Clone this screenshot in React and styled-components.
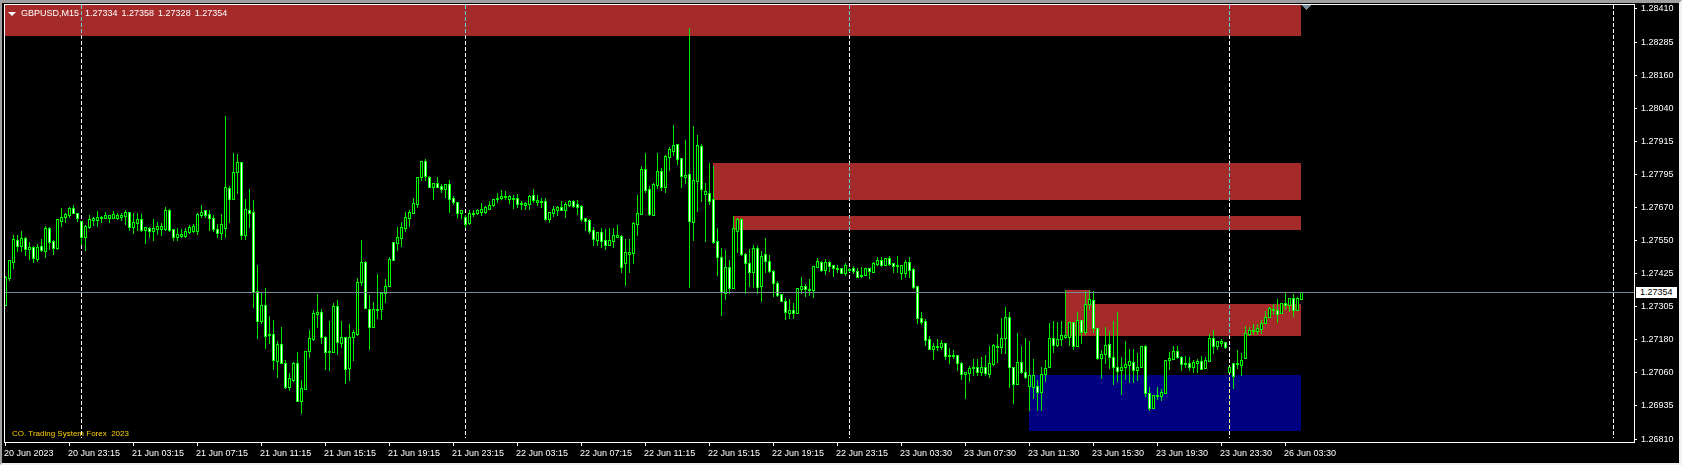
import React from "react";
import styled, { createGlobalStyle } from "styled-components";

const PRICES = [
  "1.28410", "1.28285", "1.28160", "1.28040", "1.27915", "1.27795", "1.27670",
  "1.27550", "1.27425", "1.27305", "1.27180", "1.27060", "1.26935", "1.26810",
];

const TIMES = [
  "20 Jun 2023", "20 Jun 23:15", "21 Jun 03:15", "21 Jun 07:15", "21 Jun 11:15",
  "21 Jun 15:15", "21 Jun 19:15", "21 Jun 23:15", "22 Jun 03:15", "22 Jun 07:15",
  "22 Jun 11:15", "22 Jun 15:15", "22 Jun 19:15", "22 Jun 23:15", "23 Jun 03:30",
  "23 Jun 07:30", "23 Jun 11:30", "23 Jun 15:30", "23 Jun 19:30", "23 Jun 23:30",
  "26 Jun 03:30",
];

const ZONES = [
  { x: 5, y: 5, w: 1296, h: 31, color: "#a52a2a" },
  { x: 713, y: 163, w: 588, h: 37, color: "#a52a2a" },
  { x: 733, y: 216, w: 568, h: 14, color: "#a52a2a" },
  { x: 1065, y: 290, w: 25, h: 14, color: "#a52a2a" },
  { x: 1065, y: 304, w: 236, h: 32, color: "#a52a2a" },
  { x: 1029, y: 375, w: 272, h: 56, color: "#000080" },
];

const PERIOD_LINES = [81, 465, 849, 1229, 1613];

// high top bottom low bear, one candle every 4px from x=5
const CANDLES = `276 277 305 305 0;260 260 278 280 0;235 239 262 268 0;235 240 246 251 1;231 238 246 251 0;237 238 249 255 1;
242 247 249 259 0;246 247 258 262 1;244 247 259 261 0;239 246 250 251 1;226 228 251 257 0;227 228 242 249 1;
240 241 248 254 1;219 219 248 249 0;208 217 221 226 0;213 214 217 222 0;207 208 215 217 0;205 208 213 213 1;
213 213 218 221 1;221 221 237 244 1;225 226 237 250 0;215 219 227 228 0;217 218 220 225 0;211 217 220 226 0;
216 217 218 222 0;212 215 218 218 0;215 215 218 222 0;211 214 218 218 0;213 215 218 219 0;213 215 217 220 0;
210 212 216 224 0;212 212 227 230 1;213 222 227 233 0;213 219 223 230 0;214 219 230 231 1;227 227 230 243 0;
227 228 231 237 1;219 228 231 240 0;222 226 229 234 0;223 226 229 235 0;207 210 229 230 0;209 210 230 231 1;
229 229 237 240 1;228 234 237 240 0;229 234 236 237 0;228 231 236 237 0;225 227 232 233 0;224 226 231 232 0;
213 214 231 234 0;205 212 215 217 0;210 210 215 217 1;210 214 218 230 1;215 218 229 231 1;224 229 233 237 1;
214 224 233 239 0;116 187 228 237 0;186 188 199 222 1;153 172 199 199 0;154 162 172 193 0;162 162 235 239 1;
199 209 235 239 0;189 210 213 227 1;200 212 292 307 1;265 291 321 338 1;293 305 321 323 0;288 305 336 348 1;
316 334 335 343 0;320 334 360 369 1;341 344 361 377 0;327 344 363 363 1;360 363 387 388 1;373 378 387 390 0;
362 363 380 381 0;352 363 401 401 1;380 388 401 413 0;351 351 389 389 0;330 338 351 357 0;310 313 339 340 0;
294 312 314 327 0;309 312 337 343 1;336 337 352 369 1;321 351 352 370 0;303 306 352 352 0;300 306 342 354 1;
321 337 343 347 0;337 337 369 383 1;324 337 368 380 0;330 332 337 360 0;278 282 334 335 0;240 262 282 285 0;
261 262 308 308 1;295 309 327 349 1;302 309 327 327 0;274 309 310 318 0;292 293 309 319 0;279 286 293 302 0;
257 259 286 286 0;242 242 260 260 1;227 237 243 250 0;222 227 238 246 0;212 217 228 231 0;210 212 218 226 0;
198 203 213 213 0;177 177 204 207 0;161 161 177 180 0;159 161 176 180 1;176 177 187 187 1;183 183 187 199 0;
177 183 187 187 1;184 186 189 192 1;184 184 189 197 0;180 184 199 212 1;196 198 202 204 1;202 202 213 217 1;
210 210 213 218 0;215 217 224 227 1;210 213 223 224 0;210 213 214 216 0;209 210 213 214 0;203 209 212 215 0;
206 207 212 213 0;201 205 209 209 0;199 199 205 206 0;193 198 199 202 0;190 196 198 199 0;191 196 197 199 0;
195 196 199 203 0;195 198 199 208 0;194 198 204 207 1;201 203 204 209 0;202 203 205 209 0;195 196 204 209 0;
189 195 200 202 1;195 200 202 205 0;198 201 201 207 0;198 201 219 220 1;212 212 219 222 0;206 209 213 216 0;
206 207 210 215 0;201 207 210 210 1;202 204 210 217 0;200 201 205 206 0;200 201 206 207 1;200 204 207 214 1;
205 206 219 221 1;218 218 221 230 1;219 220 231 233 1;227 230 239 245 1;232 232 240 245 0;228 232 241 247 1;
229 240 245 249 1;228 240 245 245 0;228 235 241 247 0;225 235 237 237 0;235 236 267 272 1;239 252 263 285 0;
239 252 254 272 0;222 223 253 263 0;195 213 224 235 0;166 169 214 214 0;153 169 190 192 1;186 189 214 215 1;
183 184 215 215 0;153 171 185 188 0;168 171 187 190 1;155 156 187 192 0;147 149 157 170 0;125 145 151 155 0;
144 144 159 164 1;158 158 176 187 1;140 175 177 183 0;28 174 221 287 1;126 180 222 240 0;135 145 181 211 0;
144 146 189 201 1;183 191 194 241 0;163 193 201 204 1;166 199 242 243 1;228 241 257 275 1;248 257 292 315 1;
250 267 293 299 0;260 267 288 293 1;216 228 288 288 0;218 219 231 252 0;218 219 254 255 1;253 254 263 293 1;
249 263 272 286 1;245 248 272 287 0;246 248 287 293 1;251 256 286 301 0;238 254 261 272 1;255 261 271 272 1;
270 271 283 296 1;281 283 295 296 1;294 294 301 301 1;298 301 312 319 1;299 310 313 318 0;303 310 313 318 1;
288 288 313 313 0;277 286 289 293 0;284 286 289 296 1;279 289 290 295 0;266 266 290 297 0;258 261 267 267 0;
261 262 270 271 1;259 262 270 274 0;261 262 266 271 1;265 265 268 276 1;265 268 269 272 0;268 268 273 273 1;
263 265 273 275 0;268 269 269 271 0;266 268 271 273 1;268 271 277 277 1;267 275 276 277 0;268 268 275 275 0;
268 268 271 278 1;262 263 272 272 0;257 260 264 265 0;257 260 265 266 1;258 258 265 265 0;256 258 264 265 1;
263 263 266 272 1;256 265 266 272 0;265 265 273 279 0;260 262 273 277 0;257 262 270 277 1;268 269 287 288 1;
286 286 318 323 1;312 318 322 324 1;319 321 340 345 1;336 339 349 349 1;343 346 349 359 0;339 346 347 350 0;
340 343 347 349 0;343 343 356 359 1;348 355 356 363 0;350 355 356 358 0;355 355 363 370 1;362 363 374 379 1;
372 372 374 398 0;366 368 373 381 0;359 367 368 375 0;359 367 372 375 1;357 367 372 375 0;355 367 373 375 1;
346 363 374 377 0;344 345 364 365 0;334 346 347 362 1;318 338 347 353 0;307 317 338 353 0;312 317 367 387 1;
367 367 384 403 1;333 362 384 384 0;346 362 372 373 1;338 372 377 378 1;341 375 386 410 0;359 375 387 398 0;
380 386 392 410 1;367 374 392 410 0;360 368 374 381 0;323 338 367 367 0;321 338 345 352 1;322 339 345 346 0;
321 335 339 345 0;290 335 337 338 0;322 322 337 345 0;322 322 346 349 1;312 320 346 346 0;320 320 332 343 1;
291 304 332 334 0;290 299 304 309 0;291 300 328 332 1;328 328 358 359 1;350 354 358 378 0;327 345 354 363 0;
331 344 357 368 1;321 357 367 384 1;312 367 371 381 1;357 367 370 394 0;341 364 367 379 0;349 361 365 382 0;
349 362 370 382 1;353 367 370 380 0;346 346 367 367 0;345 346 393 396 1;387 393 408 410 1;395 395 408 408 0;
387 395 396 399 0;389 392 396 400 0;360 360 393 393 0;352 358 360 369 0;346 351 359 359 0;346 351 357 358 1;
356 357 364 370 1;356 363 364 367 0;357 363 367 370 1;360 362 367 372 0;359 361 363 372 0;356 361 369 369 1;
357 360 368 368 0;334 338 361 361 0;330 338 346 353 1;341 341 346 349 0;339 341 343 346 0;342 342 347 348 1;
367 367 372 372 0;363 363 376 388 1;350 363 364 368 0;353 360 365 375 0;326 333 358 358 0;327 330 334 335 0;
324 330 331 334 0;324 328 331 334 0;320 323 329 333 0;311 317 323 323 0;307 308 317 317 0;304 309 310 314 0;
299 310 314 322 1;303 303 313 313 0;293 303 305 309 1;298 298 305 311 0;294 298 310 316 1;297 298 310 310 0;
292 292 299 299 0`
  .split(";")
  .map((row) => row.trim().split(" ").map(Number));

function Candle({ x, high, top, bottom, low, bear }) {
  return (
    <g>
      <Wick x={x} y={high} width={1} height={low - high + 1} />
      <Body
        x={x - 0.5}
        y={top + 0.5}
        width={2}
        height={Math.max(bottom - top, 1)}
        $bear={bear}
      />
    </g>
  );
}

function PriceChart() {
  return (
    <ChartSvg viewBox="5 5 1629 437" width="1629" height="437">
      {ZONES.map((zone) => (
        <rect
          key={zone.x + "-" + zone.y}
          x={zone.x}
          y={zone.y}
          width={zone.w}
          height={zone.h}
          fill={zone.color}
        />
      ))}
      {PERIOD_LINES.map((x) => (
        <PeriodLine key={x} x1={x + 0.5} x2={x + 0.5} y1={5} y2={438} />
      ))}
      {CANDLES.map(([high, top, bottom, low, bear], i) => (
        <Candle
          key={i}
          x={5 + i * 4}
          high={high}
          top={top}
          bottom={bottom}
          low={low}
          bear={bear === 1}
        />
      ))}
      <rect x={5} y={292} width={1629} height={1} fill="#778899" />
      <polygon points="1301,5 1312,5 1306.5,10" fill="#778899" />
    </ChartSvg>
  );
}

export default function App() {
  return (
    <>
      <GlobalStyle />
      <Terminal>
        <Plot>
          <PriceChart />
          <ChartTitle>
            <TitleArrow />
            <span>GBPUSD,M15</span>
            <TitleQuotes>1.27334 1.27358 1.27328 1.27354</TitleQuotes>
          </ChartTitle>
          <Watermark>CO. Trading System Forex&nbsp; 2023</Watermark>
        </Plot>
        <PriceAxis>
          {PRICES.map((price) => (
            <PriceTick key={price}>{price}</PriceTick>
          ))}
          <CurrentPrice>1.27354</CurrentPrice>
        </PriceAxis>
        <TimeAxis>
          {TIMES.map((time) => (
            <TimeTick key={time}>{time}</TimeTick>
          ))}
        </TimeAxis>
      </Terminal>
    </>
  );
}

const GlobalStyle = createGlobalStyle`
  html, body {
    margin: 0;
    background: #f0f0f0;
  }
`;

const Terminal = styled.div`
  box-sizing: border-box;
  width: 1682px;
  height: 465px;
  padding: 1px 0 0 2px;
  display: grid;
  grid-template-columns: 1631px 1fr;
  grid-template-rows: 439px 1fr;
  background: #000;
  border-top: 3px solid #a0a0a0;
  border-left: 2px solid #a0a0a0;
  border-right: 3px solid #f0f0f0;
  border-bottom: 2px solid #f0f0f0;
  color: #fff;
  font-family: "Liberation Sans", Arial, sans-serif;
  font-size: 9px;
  line-height: 11px;
`;

const Plot = styled.div`
  position: relative;
  box-sizing: border-box;
  border: 1px solid #fff;
  overflow: hidden;
`;

const ChartSvg = styled.svg`
  display: block;
  shape-rendering: crispEdges;
`;

const PeriodLine = styled.line`
  stroke: #fff;
  stroke-width: 1;
  stroke-dasharray: 4 2;
  mix-blend-mode: difference;
`;

const Wick = styled.rect`
  fill: #00e800;
`;

const Body = styled.rect`
  stroke: #00ff00;
  stroke-width: 1;
  fill: ${(props) => (props.$bear ? "#fff" : "#000")};
`;

const ChartTitle = styled.div`
  position: absolute;
  top: 3px;
  left: 3px;
  display: flex;
  align-items: center;
  white-space: nowrap;
`;

const TitleArrow = styled.i`
  width: 0;
  height: 0;
  margin-right: 5px;
  border-left: 4px solid transparent;
  border-right: 4px solid transparent;
  border-top: 4px solid #fff;
`;

const TitleQuotes = styled.span`
  margin-left: 6px;
  word-spacing: 1.5px;
`;

const Watermark = styled.div`
  position: absolute;
  left: 7px;
  bottom: 3px;
  color: #ffd000;
  font-size: 8px;
  white-space: nowrap;
`;

const PriceAxis = styled.div`
  position: relative;
  grid-column: 2;
  grid-row: 1 / 3;
  height: 442px;
  margin-top: -1px;
  display: flex;
  flex-direction: column;
  gap: 22px;
`;

const PriceTick = styled.div`
  display: flex;
  align-items: center;

  &::before {
    content: "";
    width: 2px;
    height: 1px;
    margin-right: 4px;
    background: #fff;
  }

  &:first-child,
  &:nth-last-child(3) {
    margin-bottom: 1px;
  }
`;

const CurrentPrice = styled.div`
  position: absolute;
  top: 284px;
  left: 1px;
  width: 41px;
  box-sizing: border-box;
  padding-left: 4px;
  background: #fff;
  color: #000;
`;

const TimeAxis = styled.div`
  grid-column: 1;
  grid-row: 2;
  display: flex;
  padding-left: 1px;
`;

const TimeTick = styled.div`
  flex: 0 0 64px;
  position: relative;
  padding-top: 5px;
  text-indent: -1px;
  white-space: nowrap;

  &::before {
    content: "";
    position: absolute;
    top: 0;
    left: 0;
    width: 1px;
    height: 3px;
    background: #fff;
  }
`;
